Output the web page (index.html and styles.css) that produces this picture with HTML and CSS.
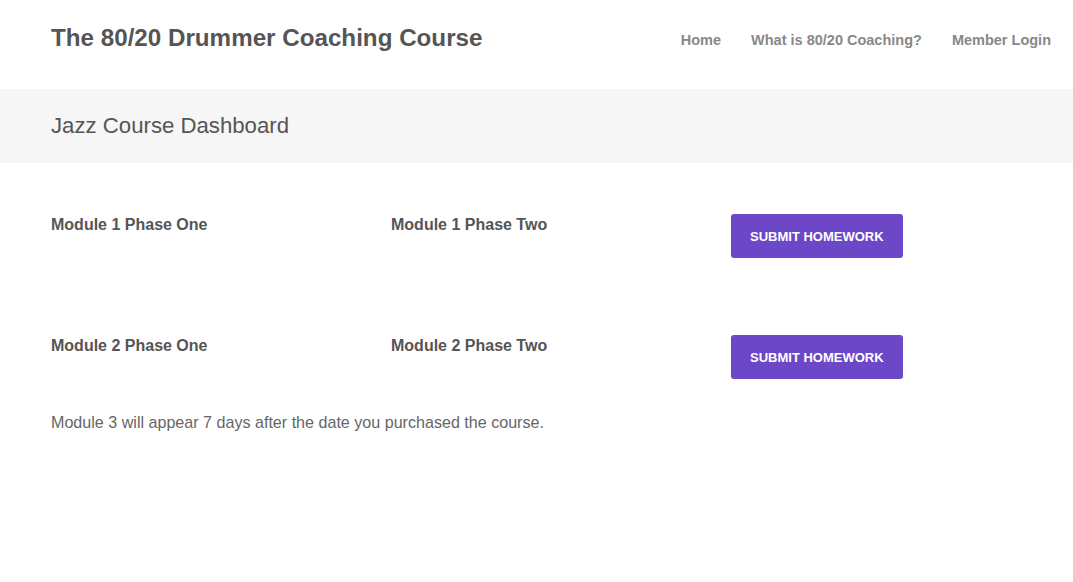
FILE: index.html
```html
<!DOCTYPE html>
<html lang="en">
<head>
    <meta charset="UTF-8">
    <meta name="viewport" content="width=device-width, initial-scale=1.0">
    <title>Jazz Course Dashboard</title>
    <link rel="stylesheet" href="styles.css">
</head>
<body>

<header class="site-header">
    <div class="site-title">The 80/20 Drummer Coaching Course</div>
    <nav class="main-nav">
        <a href="#">Home</a>
        <a href="#">What is 80/20 Coaching?</a>
        <a href="#">Member Login</a>
    </nav>
</header>

<div class="page-banner">
    <h1>Jazz Course Dashboard</h1>
</div>

<main class="content">
    <div class="module-row">
        <div class="module-title">Module 1 Phase One</div>
        <div class="module-title">Module 1 Phase Two</div>
        <div><a href="#" class="btn">Submit Homework</a></div>
    </div>

    <div class="module-row">
        <div class="module-title">Module 2 Phase One</div>
        <div class="module-title">Module 2 Phase Two</div>
        <div><a href="#" class="btn">Submit Homework</a></div>
    </div>

    <p class="notice">Module 3 will appear 7 days after the date you purchased the course.</p>
</main>

</body>
</html>
```

FILE: styles.css
```css
body {
    margin: 0;
    font-family: "Liberation Sans", Arial, sans-serif;
    color: #555;
    background-color: #fff;
}
a {
    text-decoration: none;
}
.site-header {
    height: 89px;
    display: flex;
    align-items: center;
    justify-content: space-between;
    padding: 0 22px 0 51px;
}
.site-title {
    font-size: 24.2px;
    font-weight: bold;
    color: #555;
    margin-top: -13px;
}
.main-nav {
    display: flex;
    gap: 30px;
    margin-top: -9px;
}
.main-nav a {
    font-size: 14.5px;
    font-weight: bold;
    color: #888;
}
.page-banner {
    background-color: #f6f6f6;
    height: 74px;
    display: flex;
    align-items: center;
    padding: 0 51px;
}
.page-banner h1 {
    margin: 0;
    font-size: 22.2px;
    font-weight: normal;
    color: #555;
}
.content {
    padding: 51px 51px 0;
}
.module-row {
    display: grid;
    grid-template-columns: 340px 340px 340px;
    height: 121px;
}
.module-title {
    font-size: 16px;
    font-weight: bold;
    padding-top: 2px;
}
.btn {
    display: inline-block;
    background-color: #6c47c8;
    color: #fff;
    font-size: 13px;
    font-weight: bold;
    text-transform: uppercase;
    padding: 1px 19px 0;
    height: 43px;
    line-height: 44px;
    border-radius: 3px;
}
.notice {
    margin: -43px 0 0;
    font-size: 16.1px;
    color: #666;
}
```
